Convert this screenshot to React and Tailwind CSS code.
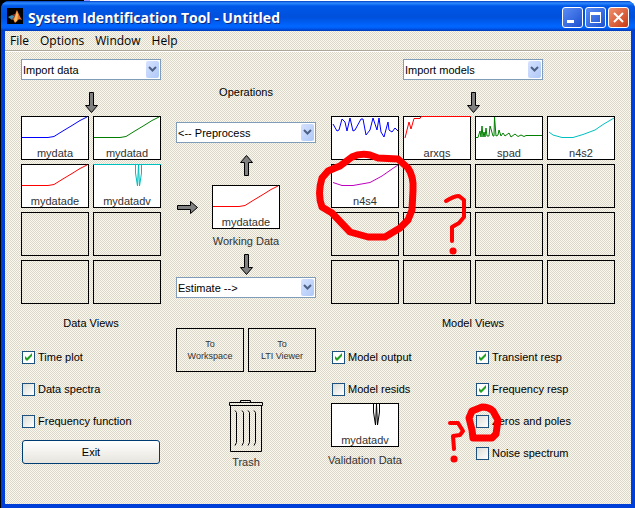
const Arrow = ({ className }) => (
	<svg className={className} width="13" height="21" viewBox="0 0 13 21" aria-hidden="true">
		<path d="M4.5.5h4v13h4l-6 7-6-7h4z" fill="#808080" stroke="#000" />
	</svg>
);

const DropDown = ({ label, className }) => (
	<div className={`relative h-[21px] ${className}`}>
		<select
			aria-label={label}
			className="block w-full h-full appearance-none border border-[#7f9db9] bg-white pl-px pr-5 text-[11px] leading-4 text-black"
		>
			<option>{label}</option>
		</select>
		<span className="pointer-events-none absolute inset-y-[2px] right-[2px] flex w-[13px] items-center justify-center rounded-xs bg-linear-to-br from-[#d6e2ff] to-[#aec8f7]">
			<svg width="9" height="7" viewBox="0 0 9 7" aria-hidden="true">
				<path d="M1 1l3.5 3.5L8 1" fill="none" stroke="#4d6185" strokeWidth="2" />
			</svg>
		</span>
	</div>
);

const Plot = ({ name, d, color }) => (
	<div className="relative flex h-11 flex-col justify-end border border-black bg-white text-center text-[11px] leading-3 text-[#333]">
		<svg
			className="absolute inset-0 h-full w-full overflow-visible"
			viewBox="0 0 66 42"
			preserveAspectRatio="none"
			aria-hidden="true"
		>
			<path d={d} fill="none" stroke={color} strokeWidth="1" />
		</svg>
		<span className="relative">{name}</span>
	</div>
);

const Slot = () => <div className="h-11 border border-black"></div>;

const Check = ({ label, checked }) => (
	<label className="flex h-4 items-center gap-[3px] whitespace-nowrap pl-px">
		<span className="relative flex h-[13px] w-[13px] shrink-0">
			<input
				type="checkbox"
				defaultChecked={checked}
				className="peer h-full w-full appearance-none border border-[#1c5180] bg-linear-to-br from-[#dcdcd7] to-white checked:from-white"
			/>
			<svg
				className="pointer-events-none absolute inset-0 hidden peer-checked:block"
				width="13"
				height="13"
				viewBox="0 0 13 13"
				aria-hidden="true"
			>
				<path d="M3 5v3l2 2 5-5V2L5 7z" fill="#21a121" />
			</svg>
		</span>
		{label}
	</label>
);

const STEP = "M0 20.5H26L32 19.5L40 14.5L50 8.5L58 3.5L65 0";
const SPIKES = "M41.5 0V8L43.5 21M44.5 0L43.5 21M44.5 0L45.5 21M47.5 0V8L45.5 21";

const dataSlots = [
	{ name: "mydata", d: STEP, color: "#00f" },
	{ name: "mydatad", d: STEP, color: "#007f00" },
	{ name: "mydatade", d: STEP, color: "#f00" },
	{ name: "mydatadv", d: `M-1 -.5H67${SPIKES}`, color: "#00bfbf" },
	null,
	null,
	null,
	null,
];

const modelSlots = [
	{
		name: "",
		d: "M1 7L5 14L7 13L10 2L13 5L15 14L18 1L21 14L23 13L29 2H31L34 18L38 13L41 1L45 13L47 1L49 15L52 20L56 5L57 13L60 15L63 11L66 14",
		color: "#00f",
	},
	{ name: "arxqs", d: "M1 21L5 5L7 12L10 1.5H16L17 -.5H67", color: "#f00" },
	{
		name: "spad",
		d: "M0 20.5H2L4 14L5 20L6 9L7 20L8 15L9 20L10 11L11 19H13L14 9L15 12L17 19H18L18.5 0L20 19L22 18L23 13L25 19L27 16L29 19L33 16L35 20L39 17L42 19.5L45 18L48 19.5L50 18.5H66",
		color: "#007f00",
	},
	{ name: "n4s2", d: "M1 15L5 18L14 20.5H25L35 17.5L47 13L55 7.5L66 1", color: "#00bfbf" },
	{ name: "n4s4", d: "M1 17.5L10 20.5H21L38 17.5L50 11L60 4L66 0", color: "#bf00bf" },
	...Array(11).fill(null),
];

const slots = (items) => items.map((s, i) => (s ? <Plot key={i} {...s} /> : <Slot key={i} />));

const Logo = () => (
	<svg width="16" height="16" viewBox="0 0 16 16" aria-hidden="true">
		<path d="M0 0h16v16H0z" fill="#000" />
		<path d="M1 9l4-2 3 1-3 4z" fill="#3f8fb5" />
		<path d="M5 7l3-1 2-4v7l-4 3-1-1 3-3z" fill="#a33a20" />
		<path d="M10 2c1 2 3 7 5 10-2-1-3-1-4 0l-3 3-2-4c2-1 3-6 4-9z" fill="#e8722a" />
		<path d="M10 3l1 4-1 6-2 1-1-2z" fill="#f4bc60" />
	</svg>
);

const captionButton =
	"flex h-[21px] w-[21px] items-center justify-center rounded-[3px] border border-white bg-linear-to-br";

export default function App() {
	return (
		<div className="flex min-h-screen flex-col bg-[linear-gradient(90deg,#000_84px,#99f_84px,#99f_90px,#fff_90px)] pl-[1px] pt-px font-['Liberation_Sans',Arial,sans-serif] text-[11px] leading-4 text-black">
			<div className="flex flex-1 flex-col rounded-t-lg border-b-4 border-l-4 border-r-4 border-[#0040d8] bg-[#0054e3]">
				<header className="-mx-1 flex h-[30px] items-center gap-[3px] rounded-t-lg bg-[linear-gradient(#003fc4,#2f8cff_2px,#0058e8_5px,#0050dc_16px,#0066ff_25px,#0060f8_27px,#0038b8)] pl-1.5 pr-1.5">
					<Logo />
					<h1 className="flex-1 whitespace-nowrap pl-0.5 pt-1 font-['Open_Sans','Noto_Sans',sans-serif] text-[14px] font-bold text-white [text-shadow:1px_1px_#0a2a80]">
						System Identification Tool - Untitled
					</h1>
					<div className="flex gap-[2px] pt-0.5">
						<button aria-label="Minimize" className={`${captionButton} from-[#5b8df5] to-[#1c4fd0]`}>
							<svg width="13" height="13" viewBox="0 0 13 13">
								<path d="M1 9h7v3H1z" fill="#fff" />
							</svg>
						</button>
						<button aria-label="Maximize" className={`${captionButton} from-[#5b8df5] to-[#1c4fd0]`}>
							<svg width="13" height="13" viewBox="0 0 13 13">
								<path d="M1 1h11v11H1zM2 4v7h9V4z" fill="#fff" fillRule="evenodd" />
							</svg>
						</button>
						<button aria-label="Close" className={`${captionButton} from-[#f0906c] to-[#c8360c]`}>
							<svg width="13" height="13" viewBox="0 0 13 13">
								<path d="M2 2l9 9M11 2l-9 9" stroke="#fff" strokeWidth="2" />
							</svg>
						</button>
					</div>
				</header>

				<div className="relative flex flex-1 flex-col bg-[repeating-conic-gradient(#fbf8ee_0_25%,#dbd7ca_0_50%)] bg-[length:2px_2px]">
					<nav className="flex h-5 items-center gap-[11px] border-b border-[#aca899] pl-[5px] font-['Open_Sans',sans-serif] text-[12px]">
						<button>File</button>
						<button>Options</button>
						<button>Window</button>
						<button>Help</button>
					</nav>

					<main className="grid grid-cols-[140fr_140fr_284fr] gap-x-[15px] border-t border-white px-4 pb-6 pt-[7px]">
						<section className="flex flex-col">
							<DropDown label="Import data" className="w-full" />
							<Arrow className="mx-auto mt-3" />
							<div className="mt-[3px] grid grid-cols-2 gap-1">{slots(dataSlots)}</div>
							<h2 className="mt-[11px] text-center">Data Views</h2>
							<div className="mt-[18px] flex flex-col gap-4">
								<Check label="Time plot" checked />
								<Check label="Data spectra" />
								<Check label="Frequency function" />
							</div>
							<button className="mx-px mt-[11px] h-6 rounded-[3px] border border-[#003c74] bg-linear-to-b from-white to-[#e6e4dc]">
								Exit
							</button>
						</section>

						<section className="flex flex-col">
							<h2 className="mt-[25px] text-center">Operations</h2>
							<DropDown label="<-- Preprocess" className="mt-[22px] w-full" />
							<Arrow className="mx-auto mt-3 rotate-180" />
							<div className="mt-[9px] grid grid-cols-[36fr_68fr_36fr] items-center">
								<svg className="ml-px" width="21" height="13" viewBox="0 0 21 13" aria-hidden="true">
									<path d="M.5 4.5v4h13v4l7-6-7-6v4z" fill="#808080" stroke="#000" />
								</svg>
								<Plot name="mydatade" d={STEP} color="#f00" />
							</div>
							<p className="mt-1 text-center text-[#333]">Working Data</p>
							<Arrow className="mx-auto mt-[5px]" />
							<DropDown label="Estimate -->" className="mt-[2px] w-full" />
							<div className="mt-[30px] grid grid-cols-2 gap-1 text-[9px] leading-3 text-[#333]">
								<button className="h-11 border border-black">
									To
									<br />
									Workspace
								</button>
								<button className="h-11 border border-black">
									To
									<br />
									LTI Viewer
								</button>
							</div>
							<svg className="mx-auto mt-7" width="34" height="52" viewBox="0 0 34 52" aria-hidden="true">
								<path
									d="M11.5 2.5v-2h10v2M.5 2.5h33v3H.5zM1.5 5.5v46h31v-46M6 10.5l1.5 2v30l-1.5 3M13 10.5l1.5 2v30l-1.5 3M19 10.5l1.5 2v30l-1.5 3M25 10.5l1.5 2v30l-1.5 3"
									fill="none"
									stroke="#000"
								/>
							</svg>
							<p className="mt-[2px] text-center text-[#333]">Trash</p>
						</section>

						<section className="flex flex-col">
							<div className="grid grid-cols-4 gap-x-1">
								<DropDown label="Import models" className="col-span-2 col-start-2" />
								<Arrow className="col-span-2 col-start-2 mx-auto mt-3" />
							</div>
							<div className="mt-[3px] grid grid-cols-4 gap-1">{slots(modelSlots)}</div>
							<h2 className="mt-[11px] text-center">Model Views</h2>
							<div className="mt-[18px] grid grid-cols-2 gap-x-1">
								<div className="flex flex-col gap-4">
									<Check label="Model output" checked />
									<Check label="Model resids" />
									<div className="-mt-[10px] grid grid-cols-2 gap-x-1 text-center">
										<Plot name="mydatadv" d={SPIKES} color="#000" />
										<p className="col-start-1 -mx-2 mt-[5px] whitespace-nowrap text-[#333]">
											Validation Data
										</p>
									</div>
								</div>
								<div className="flex flex-col gap-4">
									<Check label="Transient resp" checked />
									<Check label="Frequency resp" checked />
									<Check label="Zeros and poles" />
									<Check label="Noise spectrum" />
								</div>
							</div>
						</section>
					</main>

					{/* freehand marker notes on top of the window */}
					<svg
						className="pointer-events-none absolute inset-0 h-full w-full"
						viewBox="5 31 626 473"
						preserveAspectRatio="none"
						fill="none"
						stroke="#f00"
						strokeLinecap="round"
						strokeLinejoin="round"
						aria-hidden="true"
					>
						<path
							d="M335 168L340 166L352 157Q360 153 370 155L378 158L398 159L408 168Q414 177 413 190L412 210L408 220L400 228L385 237H368L350 232L332 213L322 207Q317 194 322 178L328 171Z"
							strokeWidth="7"
						/>
						<path d="M446 201Q454 196 459 196L464 200V217L459 223L452 227V241" strokeWidth="4" />
						<path d="M469 418L472 411L482 407Q489 407 493 411L498 420L496 434L492 438H473L472 430Z" strokeWidth="7" />
						<path d="M450 423H458L463 431L460 435L453 436L454 449" strokeWidth="4" />
						<path d="M453 251h.1M454 459h.1" strokeWidth="7" />
					</svg>
				</div>
			</div>
		</div>
	);
}
